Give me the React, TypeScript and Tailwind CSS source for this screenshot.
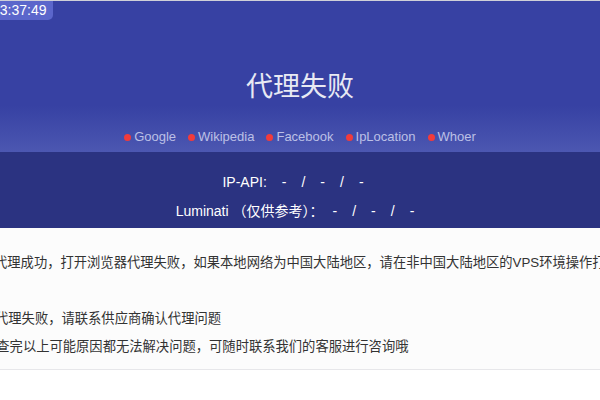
const CN = "font-['Liberation_Sans','Noto_Sans_CJK_SC',sans-serif]";

const links = ["Google", "Wikipedia", "Facebook", "IpLocation", "Whoer"];

function Dashes() {
  return (
    <span className="flex items-center gap-[15px]">
      <span>-</span>
      <span>/</span>
      <span>-</span>
      <span>/</span>
      <span>-</span>
    </span>
  );
}

export default function App() {
  return (
    <div className={`relative h-[400px] w-[600px] overflow-hidden border-t border-[#cfd0d8] bg-white ${CN}`}>
      {/* clock badge, partly off the left edge */}
      <div className="absolute left-[-12px] top-0 h-[19px] rounded-br-[5px] bg-[#5b66cb] pl-[4px] pr-[6px] text-[14px] leading-[19px] text-white">
        13:37:49
      </div>

      <header className="bg-[#3741a3]">
        <h1 className="pt-[67px] text-center text-[27px] font-normal leading-[38px] text-[#e8e9f3]">代理失败</h1>
        <div className="flex h-[46px] items-end justify-center gap-[12px] bg-linear-to-b from-[#3741a3] to-[#4c57b1] pb-[7px]">
          {links.map((l) => (
            <span key={l} className="flex items-center gap-[3px] text-[13px] leading-[16px] text-[#bcc0e6]">
              <span className="inline-block h-[7px] w-[7px] rounded-full bg-[#f23b3b]" />
              {l}
            </span>
          ))}
        </div>
      </header>

      <div className="flex flex-col items-center bg-[#2b3381] pb-[2px] pt-[16px] text-[14px] leading-[29px] text-white">
        <div className="flex items-center gap-[15px] pr-[14px]">
          <span>IP-API:</span>
          <Dashes />
        </div>
        <div className="flex items-center gap-[9px] pr-[10px]">
          <span>Luminati （仅供参考）：</span>
          <Dashes />
        </div>
      </div>

      <div className="border-b border-[#e7e7ea] bg-[#fcfcfc] pb-[8px] pt-[21px] text-[13.3px] leading-[28px] whitespace-nowrap text-[#333]">
        <p className="ml-[-6px]">代理成功，打开浏览器代理失败，如果本地网络为中国大陆地区，请在非中国大陆地区的VPS环境操作打开指纹浏览器</p>
        <p className="h-[28px]" />
        <p className="ml-[-5px]">代理失败，请联系供应商确认代理问题</p>
        <p className="ml-[-17px]">检查完以上可能原因都无法解决问题，可随时联系我们的客服进行咨询哦</p>
      </div>
    </div>
  );
}
